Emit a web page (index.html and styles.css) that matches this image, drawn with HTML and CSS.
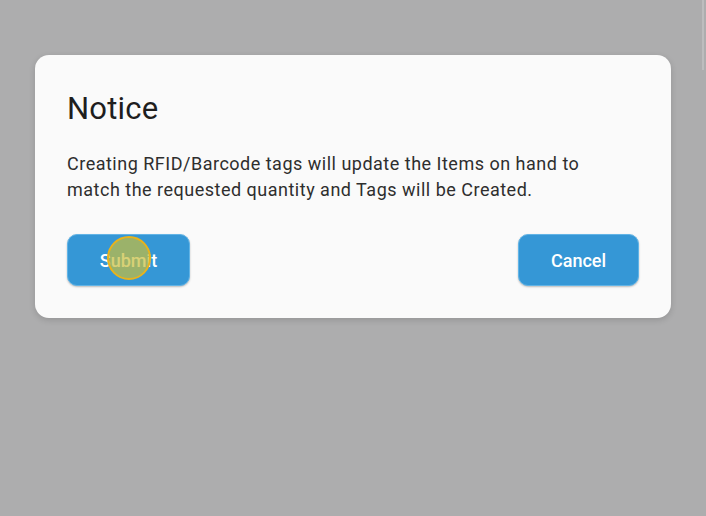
FILE: index.html
```html
<!DOCTYPE html>
<html lang="en">
<head>
    <meta charset="UTF-8">
    <meta name="viewport" content="width=device-width, initial-scale=1.0">
    <title>Notice</title>
    <link rel="stylesheet" href="styles.css">
</head>
<body>
    <div class="scroll-edge"></div>

    <!-- Notice dialog -->
    <div class="dialog">
        <h1 class="dialog-title">Notice</h1>
        <p class="dialog-text">Creating RFID/Barcode tags will update the Items on hand to match the requested quantity and Tags will be Created.</p>
        <div class="dialog-actions">
            <button class="btn" id="submit-btn">Submit<span class="touch"></span></button>
            <button class="btn" id="cancel-btn">Cancel</button>
        </div>
    </div>
</body>
</html>
```

FILE: styles.css
```css
body {
    margin: 0;
    padding: 55px 35px 0 35px;
    height: 516px;
    box-sizing: border-box;
    background-color: #adadae;
    font-family: Roboto, "Noto Sans", sans-serif;
    position: relative;
}

.scroll-edge {
    position: absolute;
    top: 0;
    right: 2px;
    width: 2px;
    height: 70px;
    background-color: #bdbdbe;
}

.dialog {
    background-color: #fafafa;
    border-radius: 14px;
    padding: 34px 32px 32px 32px;
    box-shadow: 0 2px 6px rgba(0, 0, 0, 0.15);
    height: 263px;
    box-sizing: border-box;
}

.dialog-title {
    margin: 0;
    font-size: 31px;
    font-weight: 400;
    line-height: 40px;
    color: #1e1e1e;
    letter-spacing: 0.2px;
}

.dialog-text {
    margin: 22px 0 0 0;
    max-width: 540px;
    font-size: 18px;
    line-height: 26px;
    color: #2e2e2e;
    letter-spacing: 0.5px;
}

.dialog-actions {
    display: flex;
    justify-content: space-between;
    margin-top: 31px;
}

.btn {
    position: relative;
    height: 52px;
    padding: 0;
    background-color: #3597d6;
    color: #fff;
    border: 1px solid #62b4e6;
    border-radius: 10px;
    font-family: Roboto, sans-serif;
    font-size: 18px;
    font-weight: 500;
    box-shadow: 0 1px 2px rgba(0, 0, 0, 0.25);
}

#submit-btn {
    width: 123px;
}

#cancel-btn {
    width: 121px;
}

/* touch indicator */
.touch {
    position: absolute;
    left: 39px;
    top: 1px;
    width: 40px;
    height: 40px;
    border-radius: 50%;
    border: 2px solid #e8b31c;
    background-color: rgba(200, 190, 60, 0.7);
}
```
